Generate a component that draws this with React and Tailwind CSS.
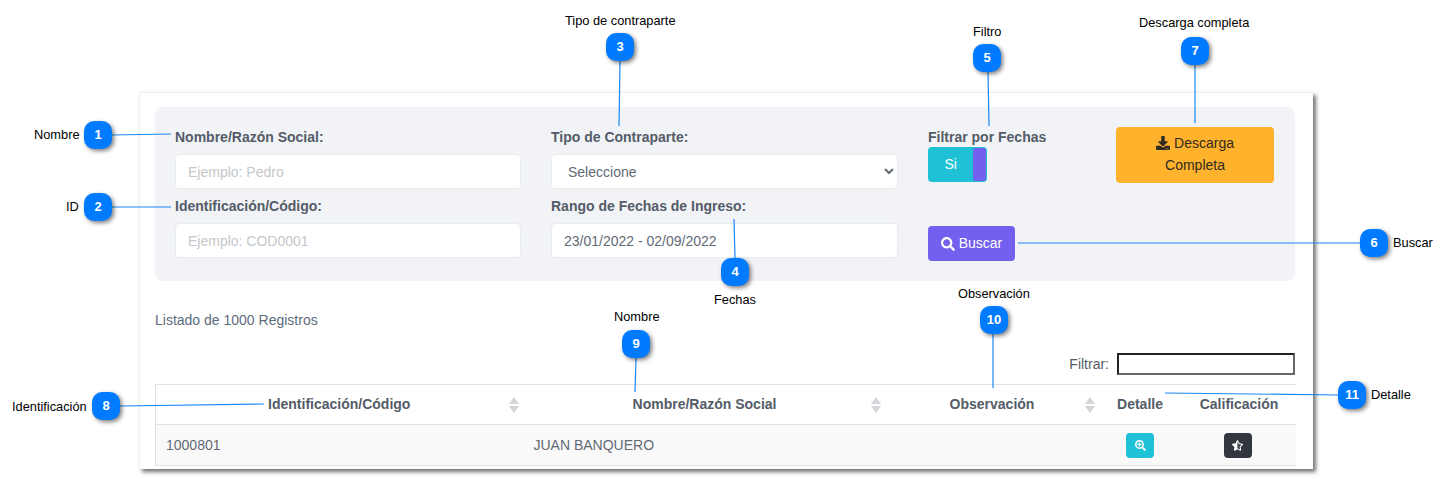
import React from "react";
import { FaDownload, FaSearch, FaSearchPlus, FaStarHalfAlt } from "react-icons/fa";

const LINES = [
  [112, 135, 171, 134],
  [112, 207, 171, 207],
  [620, 61, 619, 126],
  [734, 219, 735, 258],
  [988, 72, 989, 126],
  [1018, 243, 1360, 243],
  [1195, 65, 1195, 123],
  [120, 406, 264, 404],
  [636, 358, 635, 392],
  [993, 334, 993, 388],
  [1165, 393, 1338, 395],
];

function Badge({ className, children }) {
  return (
    <div className={`absolute w-[28px] h-[28px] rounded-[10px] bg-[#007bff] text-white text-[13px] font-bold flex items-center justify-center shadow-[2px_2px_4px_rgba(0,0,0,0.5)] ${className}`}>
      {children}
    </div>
  );
}

function Note({ className, children }) {
  return <div className={`absolute text-[12.8px] leading-[14px] text-black whitespace-nowrap ${className}`}>{children}</div>;
}

function Sort({ className }) {
  return (
    <svg className={`absolute top-[12px] ${className}`} width="10" height="16" viewBox="0 0 10 16">
      <path d="M5 0 L10 7 L0 7 Z" fill="#d3d5d8" />
      <path d="M5 16 L10 9 L0 9 Z" fill="#d3d5d8" />
    </svg>
  );
}

function Field({ label, children }) {
  return (
    <div className="flex flex-col">
      <label className="text-[14px] leading-[20px] font-bold text-[#545c68] mb-[7px]">{label}</label>
      {children}
    </div>
  );
}

const inputCls = "h-[35px] w-full rounded-[4px] border border-[#e9ecef] bg-white px-[12px] text-[14px] text-[#626a76] placeholder:text-[#c4c7cb] outline-none";

export default function App() {
  return (
    <div className="relative w-[1450px] h-[479px] overflow-hidden bg-white font-['Liberation_Sans',Arial,sans-serif]">
      {/* main panel */}
      <div className="ml-[139px] pt-[92px]">
        <div className="w-[1174px] h-[377px] bg-white border-t border-l border-[#eceef0] px-[15px] pt-[14px] shadow-[3px_3px_4px_rgba(0,0,0,0.55)] overflow-hidden">
          <div className="w-[1140px] h-[174px] rounded-[8px] bg-[#f1f3f7] pl-[20px] pt-[20px] grid grid-cols-[346px_347px_158px_158px] gap-x-[30px] items-start">
            <div className="flex flex-col gap-[7px]">
              <Field label="Nombre/Razón Social:">
                <input className={inputCls} placeholder="Ejemplo: Pedro" readOnly />
              </Field>
              <Field label="Identificación/Código:">
                <input className={inputCls} placeholder="Ejemplo: COD0001" readOnly />
              </Field>
            </div>
            <div className="flex flex-col gap-[7px]">
              <Field label="Tipo de Contraparte:">
                <select className="h-[35px] w-full rounded-[4px] border border-[#e9ecef] bg-white pl-[12px] pr-[4px] text-[14px] text-[#626a76] outline-none" defaultValue="x">
                  <option value="x">Seleccione</option>
                </select>
              </Field>
              <Field label="Rango de Fechas de Ingreso:">
                <input className={inputCls} value="23/01/2022 - 02/09/2022" readOnly />
              </Field>
            </div>
            <div className="flex flex-col">
              <div className="text-[14px] leading-[20px] font-bold text-[#545c68]">Filtrar por Fechas</div>
              <div className="w-[59px] h-[35px] rounded-[4px] bg-[#1fc1d6] flex items-center justify-between pr-[1px] py-[1px] text-white text-[14px]">
                <span className="w-[47px] text-center">Si</span>
                <span className="w-[13px] h-[33px] rounded-[3px] bg-[#7460ee]" />
              </div>
              <button className="mt-[44px] w-[87px] h-[35px] rounded-[4px] bg-[#7460ee] text-white text-[14px] flex items-center justify-center gap-[4px]">
                <FaSearch className="text-[14px]" /> Buscar
              </button>
            </div>
            <button className="w-[158px] h-[56px] rounded-[4px] bg-[#ffb22b] text-[#2f2b22] text-[14px] leading-[22px] text-center pb-[2px]">
              <FaDownload className="inline text-[14px] mr-[4px] align-[-2px]" />Descarga<br />Completa
            </button>
          </div>

          <div className="mt-[29px] text-[14px] leading-[20px] text-[#5c6c7c]">Listado de 1000 Registros</div>

          <div className="mt-[23px] flex justify-end items-center gap-[8px] w-[1140px]">
            <span className="text-[14px] text-[#545c68]">Filtrar:</span>
            <div className="w-[178px] h-[22px] border-2 border-t-[#222222] border-l-[#222222] border-r-[#666666] border-b-[#666666] bg-white" />
          </div>

          <table className="mt-[9px] w-[1140px] table-fixed border-collapse text-[14px] text-[#626a76]">
            <thead>
              <tr className="h-[40px] border-t border-b border-[#dee2e6] text-[#545c68]">
                <th className="relative w-[367px] border-l border-[#dee2e6] font-bold text-center">Identificación/Código<Sort className="right-[4px]" /></th>
                <th className="relative w-[364px] font-bold text-center">Nombre/Razón Social<Sort className="right-[6px]" /></th>
                <th className="relative w-[211px] font-bold text-center">Observación<Sort className="right-[3px]" /></th>
                <th className="w-[85px] font-bold text-center">Detalle</th>
                <th className="w-[113px] font-bold text-center">Calificación</th>
              </tr>
            </thead>
            <tbody>
              <tr className="h-[41px] bg-[#f9f9f9] border-b border-[#dee2e6]">
                <td className="pl-[10px] border-l border-[#dee2e6]">1000801</td>
                <td className="pl-[11px]">JUAN BANQUERO</td>
                <td />
                <td>
                  <div className="mx-auto w-[28px] h-[25px] rounded-[4px] bg-[#1fc1d6] flex items-center justify-center text-white text-[11px]"><FaSearchPlus /></div>
                </td>
                <td>
                  <div className="ml-[41px] w-[28px] h-[25px] rounded-[4px] bg-[#31363f] flex items-center justify-center text-white text-[11px]"><FaStarHalfAlt /></div>
                </td>
              </tr>
            </tbody>
          </table>
        </div>
      </div>

      {/* callout lines */}
      <svg className="absolute left-0 top-0 pointer-events-none" width="1450" height="479">
        {LINES.map((l, i) => (
          <line key={i} x1={l[0]} y1={l[1]} x2={l[2]} y2={l[3]} stroke="#1a87f5" strokeWidth="1.2" />
        ))}
      </svg>

      {/* callouts */}
      <Badge className="left-[84px] top-[121px]">1</Badge>
      <Badge className="left-[84px] top-[193px]">2</Badge>
      <Badge className="left-[606px] top-[33px]">3</Badge>
      <Badge className="left-[721px] top-[258px]">4</Badge>
      <Badge className="left-[973px] top-[44px]">5</Badge>
      <Badge className="left-[1360px] top-[229px]">6</Badge>
      <Badge className="left-[1181px] top-[37px]">7</Badge>
      <Badge className="left-[92px] top-[392px]">8</Badge>
      <Badge className="left-[622px] top-[330px]">9</Badge>
      <Badge className="left-[980px] top-[306px]">10</Badge>
      <Badge className="left-[1338px] top-[381px]">11</Badge>

      <Note className="left-[34px] top-[128px]">Nombre</Note>
      <Note className="left-[66px] top-[200px]">ID</Note>
      <Note className="left-[565px] top-[14px]">Tipo de contraparte</Note>
      <Note className="left-[714px] top-[293px]">Fechas</Note>
      <Note className="left-[973px] top-[25px]">Filtro</Note>
      <Note className="left-[1393px] top-[236px]">Buscar</Note>
      <Note className="left-[1139px] top-[16px]">Descarga completa</Note>
      <Note className="left-[12px] top-[400px]">Identificación</Note>
      <Note className="left-[614px] top-[310px]">Nombre</Note>
      <Note className="left-[958px] top-[287px]">Observación</Note>
      <Note className="left-[1371px] top-[388px]">Detalle</Note>
    </div>
  );
}
